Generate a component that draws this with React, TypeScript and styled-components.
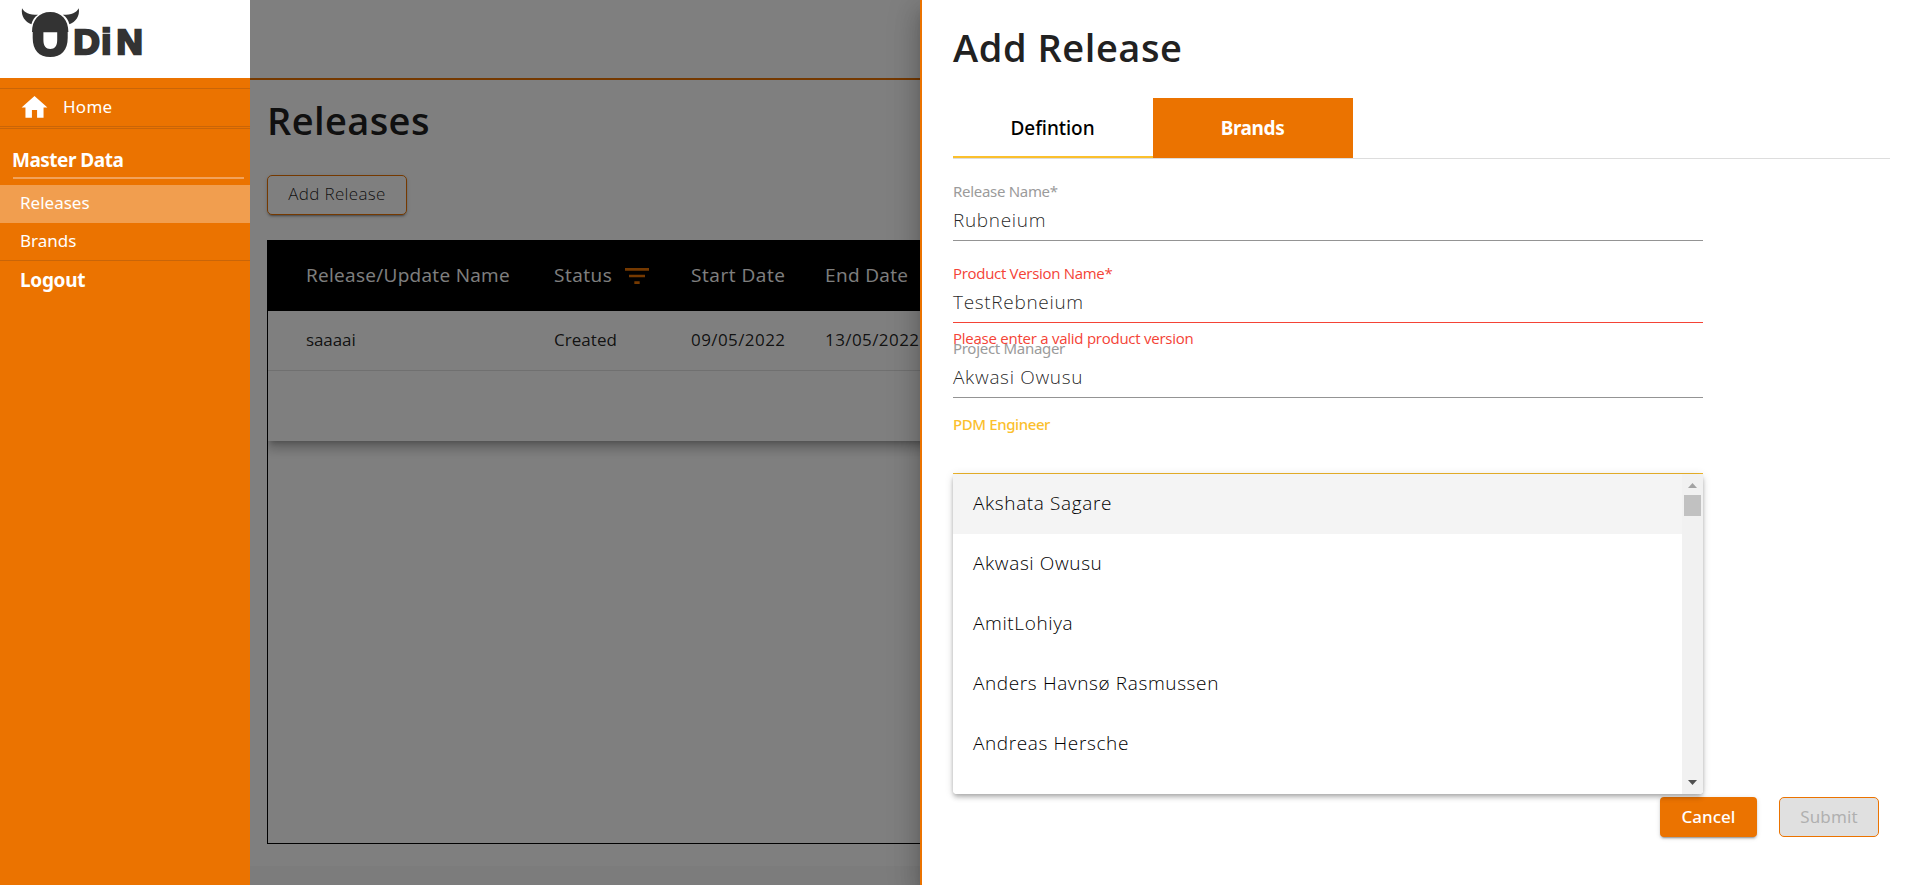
import React from "react";
import styled, { createGlobalStyle, css } from "styled-components";

const ORANGE = "#eb7300";
const AMBER = "#fbc02d";
const RED = "#f44336";
const regular = `"Noto Sans", "Open Sans", sans-serif`;
const light = `"Open Sans", "Noto Sans", sans-serif`;

const GlobalStyle = createGlobalStyle`
  * { box-sizing: border-box; }
  body { margin: 0; overflow: hidden; background: #fff; font-family: ${regular}; }
  button { font: inherit; cursor: pointer; }
`;

const Shell = styled.div`
  position: relative;
  display: flex;
  width: 1920px;
  height: 885px;
  overflow: hidden;
`;

/* ---------- Sidebar ---------- */

const Sidebar = styled.nav`
  flex: none;
  width: 250px;
  background: ${ORANGE};
  color: #fff;
  font-size: 17px;
`;

const LogoArea = styled.div`
  height: 78px;
  margin-bottom: 10px;
  background: #fff;
  svg { display: block; }
`;

const HomeLink = styled.a`
  display: flex;
  align-items: center;
  gap: 13px;
  height: 39px;
  padding: 0 0 2px 19px;
  border: solid #c96508;
  border-width: 1px 0;
  letter-spacing: 0.25px;
  svg { position: relative; top: 1px; }
`;

const NavSection = styled.section`
  margin-top: 1px;
  border: solid #c96508;
  border-width: 1px 0;
`;

const NavHeading = styled.h2`
  margin: 0 6px 6px 13px;
  padding-top: 14px;
  border-bottom: 2px solid #f2a25a;
  font-size: 19px;
  font-weight: 700;
  line-height: 34px;
  letter-spacing: -0.5px;
  text-indent: -1px;
`;

const NavItem = styled.a<{ $active?: boolean }>`
  display: block;
  height: ${(p) => (p.$active ? 38 : 37)}px;
  padding-left: 20px;
  line-height: 35px;
  background: ${(p) => (p.$active ? "#f19e4f" : "transparent")};
`;

const Logout = styled.a`
  display: block;
  padding-left: 20px;
  font-size: 19px;
  font-weight: 700;
  line-height: 39px;
  letter-spacing: -0.3px;
`;

/* ---------- Releases page ---------- */

const Page = styled.main`
  display: flex;
  flex-direction: column;
  flex: 1;
  min-width: 0;
  color: rgba(0, 0, 0, 0.87);
`;

const TopBar = styled.header`
  height: 80px;
  border-bottom: 2px solid ${ORANGE};
`;

const Content = styled.div`
  display: flex;
  flex-direction: column;
  align-items: flex-start;
  flex: 1;
  padding: 0 17px 22px;
`;

const PageTitle = styled.h1`
  margin: 0 0 15px;
  font: 600 38px/80px ${light};
  color: #212121;
  letter-spacing: 0.4px;
`;

const OutlineButton = styled.button`
  height: 40px;
  width: 140px;
  margin-bottom: 25px;
  padding: 0 0 3px;
  border: 1px solid ${ORANGE};
  border-radius: 5px;
  background: #fff;
  color: rgba(0, 0, 0, 0.87);
  font-family: ${light};
  font-size: 17px;
  font-weight: 300;
  letter-spacing: 0.35px;
  box-shadow: 0 3px 1px -2px rgba(0, 0, 0, 0.2), 0 2px 2px rgba(0, 0, 0, 0.14), 0 1px 5px rgba(0, 0, 0, 0.12);
`;

const TableFrame = styled.div`
  align-self: stretch;
  flex: 1;
  overflow: hidden;
  border: 1px solid #000;
  border-top: 0;
`;

const Table = styled.div`
  height: 201px;
  background: #fff;
  box-shadow: 0 5px 5px -3px rgba(0, 0, 0, 0.2), 0 8px 10px 1px rgba(0, 0, 0, 0.14), 0 3px 14px 2px rgba(0, 0, 0, 0.12);
`;

const columns = css`
  display: grid;
  grid-template-columns: 248px 137px 134px 1fr;
  align-items: center;
  padding-left: 38px;
  font-family: ${light};
`;

const HeadRow = styled.div`
  ${columns}
  height: 71px;
  padding-bottom: 2px;
  background: #000;
  color: #fff;
  font-size: 19px;
`;

const HeadCell = styled.div<{ $tracking: number }>`
  display: flex;
  align-items: center;
  gap: 10px;
  letter-spacing: ${(p) => p.$tracking}px;
  white-space: nowrap;
  svg { position: relative; top: 1px; left: -1px; }
`;

const BodyRow = styled.div`
  ${columns}
  height: 60px;
  padding-bottom: 2px;
  border-bottom: 1px solid #e0e0e0;
  font-size: 17px;
`;

const BodyCell = styled.div<{ $tracking: number }>`
  letter-spacing: ${(p) => p.$tracking}px;
`;

const Footer = styled.footer`
  height: 19px;
  background: #f9f9f9;
`;

const Backdrop = styled.div`
  position: absolute;
  inset: 0 0 0 250px;
  background: rgba(0, 0, 0, 0.5);
`;

/* ---------- Drawer ---------- */

const Drawer = styled.aside`
  position: absolute;
  top: 0;
  right: 0;
  bottom: 0;
  width: 1000px;
  padding: 0 30px 0 31px;
  border-left: 2px solid ${ORANGE};
  background: #fff;
  color: rgba(0, 0, 0, 0.87);
  box-shadow: 0 8px 10px -5px rgba(0, 0, 0, 0.2), 0 16px 24px 2px rgba(0, 0, 0, 0.14), 0 6px 30px 5px rgba(0, 0, 0, 0.12);
`;

const DrawerTitle = styled.h1`
  margin: 0 0 3px;
  font: 600 38px/95px ${light};
  color: #212121;
  letter-spacing: 0.55px;
`;

const Tabs = styled.div`
  display: flex;
  height: 61px;
  margin-bottom: 22px;
  border-bottom: 1px solid #ddd;
`;

const Tab = styled.button<{ $filled?: boolean }>`
  width: 200px;
  height: 60px;
  padding: 2px 1px 0 0;
  border: 0;
  border-bottom: 2px solid ${(p) => (p.$filled ? ORANGE : AMBER)};
  background: ${(p) => (p.$filled ? ORANGE : "#fff")};
  color: ${(p) => (p.$filled ? "#fff" : "#000")};
  font-size: 19px;
  font-weight: ${(p) => (p.$filled ? 700 : 500)};
  letter-spacing: ${(p) => (p.$filled ? -0.4 : -0.05)}px;
`;

type Tone = "idle" | "error" | "focus";
const labelColor = { idle: "#9b9b9b", error: RED, focus: AMBER };
const lineColor = { idle: "#949494", error: RED, focus: "#efb62b" };

const FieldBox = styled.div<{ $tone: Tone; $gap: number }>`
  position: relative;
  width: 750px;
  height: 60px;
  margin-bottom: ${(p) => p.$gap}px;
  border-bottom: 1px solid ${(p) => lineColor[p.$tone]};
`;

const Label = styled.label<{ $tone: Tone }>`
  display: block;
  height: 25px;
  font: ${(p) => (p.$tone === "focus" ? 500 : 400)} 15px/21px ${(p) => (p.$tone === "error" ? light : regular)};
  letter-spacing: ${(p) => (p.$tone === "focus" ? -0.4 : -0.3)}px;
  color: ${(p) => labelColor[p.$tone]};
`;

const Value = styled.div`
  font: 300 19px/28px ${light};
  letter-spacing: 0.68px;
`;

const ErrorText = styled.div`
  position: absolute;
  z-index: 1;
  top: 65px;
  left: 0;
  font: 400 15px/21px ${light};
  letter-spacing: -0.25px;
  color: ${RED};
`;

const Menu = styled.div`
  position: absolute;
  z-index: 2;
  top: 60px;
  left: 0;
  display: flex;
  width: 750px;
  height: 320px;
  overflow: hidden;
  border-radius: 0 0 4px 4px;
  background: #fff;
`;

const MenuShadow = styled.div`
  position: absolute;
  z-index: 1;
  top: 60px;
  left: 0;
  width: 750px;
  height: 320px;
  border-radius: 4px;
  box-shadow: 0 2px 4px -1px rgba(0, 0, 0, 0.2), 0 4px 5px rgba(0, 0, 0, 0.14), 0 1px 10px rgba(0, 0, 0, 0.12);
`;

const Options = styled.div`
  flex: 1;
`;

const Option = styled.div<{ $active: boolean }>`
  height: 60px;
  padding-left: 20px;
  background: ${(p) => (p.$active ? "#f4f4f4" : "#fff")};
  font: 300 19px/59px ${light};
  letter-spacing: 0.62px;
  color: #000;
`;

const ScrollTrack = styled.div`
  display: flex;
  flex-direction: column;
  align-items: center;
  width: 21px;
  padding: 9px 0;
  background: #f1f1f1;
  svg { display: block; }
`;

const ScrollThumb = styled.div`
  width: 17px;
  height: 21px;
  margin: 7px 0 auto;
  background: #c1c1c1;
`;

const Actions = styled.div`
  display: flex;
  justify-content: flex-end;
  gap: 22px;
  padding: 323px 11px 0 0;
`;

const CancelButton = styled.button`
  width: 97px;
  height: 40px;
  padding: 0 0 2px;
  border: 0;
  border-radius: 4px;
  background: ${ORANGE};
  color: #fff;
  font-size: 17px;
  font-weight: 500;
  letter-spacing: 0;
  box-shadow: 0 3px 1px -2px rgba(0, 0, 0, 0.2), 0 2px 2px rgba(0, 0, 0, 0.14), 0 1px 5px rgba(0, 0, 0, 0.12);
`;

const SubmitButton = styled.button`
  width: 100px;
  height: 40px;
  padding: 0 0 2px;
  border: 1px solid ${ORANGE};
  border-radius: 5px;
  background: #e0e0e0;
  color: #b0b0b0;
  font-size: 17px;
  letter-spacing: 0.15px;
`;

function Logo() {
  return (
    <svg width="160" height="70" viewBox="0 0 160 70" fill="#333">
      <path d="M22 8.2C24.5 12.8 29 14.8 38 14.8C34.4 17 32.6 20 31.4 24.2C25.2 21.8 20.8 16.5 22 8.2Z" />
      <path d="M78.8 8.2C76.3 12.8 71.8 14.8 62.8 14.8C66.4 17 68.2 20 69.4 24.2C75.6 21.8 80 16.5 78.8 8.2Z" />
      <path
        fillRule="evenodd"
        d="M32 32C32 20 39 12 50.2 12C61.5 12 68.4 20 68.4 32H67.7V38C67.7 50 61.5 57 50.2 57C38.8 57 32.7 50 32.7 38V32ZM43.4 32.3V40C43.4 46 46 49 50.3 49C54.7 49 57.2 46 57.2 40V32.3Z"
      />
      <text
        transform="scale(1.04 1)"
        x="70.6 97.4 112"
        y="53.8"
        fontFamily="Liberation Sans, Arial, sans-serif"
        fontWeight="700"
        fontSize="35"
        stroke="#333"
        strokeWidth="2.4"
      >
        DiN
      </text>
    </svg>
  );
}

function HomeIcon() {
  return (
    <svg width="31" height="31" viewBox="0 0 24 24" fill="#fff">
      <path d="M10 20v-6h4v6h5v-8h3L12 3 2 12h3v8z" />
    </svg>
  );
}

function FilterIcon() {
  return (
    <svg width="32" height="32" viewBox="0 0 24 24" fill={ORANGE}>
      <path d="M10 18h4v-2h-4v2zM3 6v2h18V6H3zm3 7h12v-2H6v2z" />
    </svg>
  );
}

const people = ["Akshata Sagare", "Akwasi Owusu", "AmitLohiya", "Anders Havnsø Rasmussen", "Andreas Hersche"];

interface FieldProps {
  label: string;
  value?: string;
  tone?: Tone;
  gap: number;
  error?: string;
  children?: React.ReactNode;
}

function Field({ label, value, tone = "idle", gap, error, children }: FieldProps) {
  return (
    <FieldBox $tone={tone} $gap={gap}>
      <Label $tone={tone}>{label}</Label>
      <Value>{value}</Value>
      {error && <ErrorText>{error}</ErrorText>}
      {children}
    </FieldBox>
  );
}

export default function App() {
  return (
    <Shell>
      <GlobalStyle />
      <Sidebar>
        <LogoArea>
          <Logo />
        </LogoArea>
        <HomeLink>
          <HomeIcon />
          Home
        </HomeLink>
        <NavSection>
          <NavHeading>Master Data</NavHeading>
          <NavItem $active>Releases</NavItem>
          <NavItem>Brands</NavItem>
        </NavSection>
        <Logout>Logout</Logout>
      </Sidebar>

      <Page>
        <TopBar />
        <Content>
          <PageTitle>Releases</PageTitle>
          <OutlineButton>Add Release</OutlineButton>
          <TableFrame>
            <Table>
              <HeadRow>
                <HeadCell $tracking={0.3}>Release/Update Name</HeadCell>
                <HeadCell $tracking={0.5}>
                  Status
                  <FilterIcon />
                </HeadCell>
                <HeadCell $tracking={0.55}>Start Date</HeadCell>
                <HeadCell $tracking={0.35}>End Date</HeadCell>
              </HeadRow>
              <BodyRow>
                <BodyCell $tracking={-0.1}>saaaai</BodyCell>
                <BodyCell $tracking={0.05}>Created</BodyCell>
                <BodyCell $tracking={0.42}>09/05/2022</BodyCell>
                <BodyCell $tracking={0.42}>13/05/2022</BodyCell>
              </BodyRow>
            </Table>
          </TableFrame>
        </Content>
        <Footer />
      </Page>
      <Backdrop />

      <Drawer>
        <DrawerTitle>Add Release</DrawerTitle>
        <Tabs>
          <Tab>Defintion</Tab>
          <Tab $filled>Brands</Tab>
        </Tabs>
        <Field label="Release Name*" value="Rubneium" gap={22} />
        <Field
          label="Product Version Name*"
          value="TestRebneium"
          tone="error"
          gap={15}
          error="Please enter a valid product version"
        />
        <Field label="Project Manager" value="Akwasi Owusu" gap={16} />
        <Field label="PDM Engineer" tone="focus" gap={0}>
          <MenuShadow />
          <Menu>
            <Options>
              {people.map((name, i) => (
                <Option key={name} $active={i === 0}>
                  {name}
                </Option>
              ))}
            </Options>
            <ScrollTrack>
              <svg width="9" height="5" viewBox="0 0 9 5" fill="#a3a3a3">
                <path d="M0 5 4.5 0 9 5z" />
              </svg>
              <ScrollThumb />
              <svg width="9" height="5" viewBox="0 0 9 5" fill="#505050">
                <path d="M0 0 4.5 5 9 0z" />
              </svg>
            </ScrollTrack>
          </Menu>
        </Field>
        <Actions>
          <CancelButton>Cancel</CancelButton>
          <SubmitButton>Submit</SubmitButton>
        </Actions>
      </Drawer>
    </Shell>
  );
}
